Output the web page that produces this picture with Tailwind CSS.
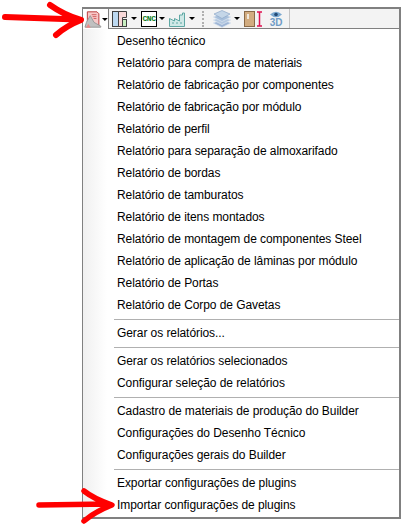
<!DOCTYPE html>
<html lang="pt">
<head>
    <meta charset="UTF-8">
    <title>Relatórios</title>
    <script src="https://cdn.jsdelivr.net/npm/@tailwindcss/browser@4"></script>
</head>
<body class="bg-white">
    <div class="relative w-[401px] h-[530px] overflow-hidden bg-white pt-[7px] pl-[82px] font-['Liberation_Sans',sans-serif] text-[12px] tracking-[-0.07px] text-black">
        <div class="w-[319px] h-[512px] border-l border-b-2 border-r-2 border-[#808080] bg-white flex flex-col">
            <!-- toolbar -->
            <div class="h-[22px] flex shrink-0">
                <div class="w-[26px] h-[23px] border-t-2 border-[#808080] border-r bg-white flex items-center pl-[1px]">
                    <svg width="19" height="19" viewBox="0 0 19 19">
                        <path d="M3.500 1.500h10l2 2v12h-12z" fill="#f8c8c8" stroke="#b83838"/>
                        <path d="M8 4.500h5M9 6.500h4M10 8.500h3" stroke="#d06060"/>
                        <path d="M1 17.500l1.500-5 4-7 4 7 7 4v1z" fill="#c0c0c0" stroke="#989898"/>
                        <path d="M2 18h5l-2.500-4z" fill="#ee8888"/>
                    </svg>
                    <svg width="6" height="3" viewBox="0 0 6 3"><path d="M0 0h6L3 3z" fill="#000"/></svg>
                </div>
                <div class="flex-1 border-t-2 border-b border-[#808080] bg-[#f3f3f3] flex items-center">
                    <svg width="16" height="16" viewBox="0 0 16 16" class="ml-[3px]">
                        <rect x="0.500" y="0.500" width="6" height="15" fill="#bcd8f0" stroke="#404040"/>
                        <path d="M6.500 0.500h8v6h-4v9h-4z" fill="#f8d8d8" stroke="#404040"/>
                        <rect x="10.500" y="8.500" width="4" height="7" fill="#c8eec0" stroke="#404040"/>
                    </svg>
                    <svg width="6" height="3" viewBox="0 0 6 3" class="ml-[3px]"><path d="M0 0h6L3 3z" fill="#000"/></svg>
                    <div class="ml-[4px] w-[16px] h-[16px] border border-black bg-white flex items-center justify-center font-['Liberation_Mono',monospace] text-[8px] font-bold text-[#0a7a20] leading-none tracking-[-0.5px]">CNC</div>
                    <svg width="6" height="3" viewBox="0 0 6 3" class="ml-[2px]"><path d="M0 0h6L3 3z" fill="#000"/></svg>
                    <svg width="18" height="16" viewBox="0 0 18 16" class="ml-[4px]">
                        <path d="M0.500 15.500v-8l5 2.500v-2.500l5 2.500v-6h3v-2h2v13.500z" fill="#cfe8e6" stroke="#5fa8a4"/>
                        <path d="M3 12h2M7 12h2M11 12h2" stroke="#5fa8a4"/>
                    </svg>
                    <svg width="6" height="3" viewBox="0 0 6 3" class="ml-[2px]"><path d="M0 0h6L3 3z" fill="#000"/></svg>
                    <div class="ml-[7px] w-[1px] h-[16px] border-l-2 border-dotted border-[#b0b0b0]"></div>
                    <svg width="20" height="18" viewBox="0 0 20 18" class="ml-[8px]">
                        <path d="M10 9.500l9 3.500-9 4.500-9-4.500z" fill="#9fb6d6" stroke="#dfe8f2" stroke-width="0.700"/>
                        <path d="M10 6.500l9 3.500-9 4.500-9-4.500z" fill="#b4c8e0" stroke="#dfe8f2" stroke-width="0.700"/>
                        <path d="M10 3.500l9 3.500-9 4.500-9-4.500z" fill="#a8c0dc" stroke="#dfe8f2" stroke-width="0.700"/>
                        <path d="M10 0.500l8 3.500-8 4.500-8-4.500z" fill="#c4d6e8" stroke="#8ea8c8" stroke-width="0.700"/>
                    </svg>
                    <svg width="6" height="3" viewBox="0 0 6 3" class="ml-[2px]"><path d="M0 0h6L3 3z" fill="#000"/></svg>
                    <svg width="19" height="16" viewBox="0 0 19 16" class="ml-[4px]">
                        <rect x="0.500" y="0.500" width="10" height="15" fill="#d2ac80" stroke="#8a6a48"/>
                        <rect x="3" y="3" width="2" height="5" fill="#f0e8dc"/>
                        <path d="M13 1h5M13 15h5M15.500 1v14" stroke="#e01050" stroke-width="1.500"/>
                    </svg>
                    <div class="ml-[5px] w-[16px] flex flex-col items-center leading-none">
                        <svg width="12" height="7" viewBox="0 0 12 7"><path d="M0 3.500Q6-2 12 3.500Q6 9 0 3.500z" fill="#7aa8d0"/><circle cx="6" cy="3.500" r="1.800" fill="#244a74"/></svg>
                        <span class="font-bold text-[10px] leading-[9px] text-[#6f9cc6]">3D</span>
                    </div>
                    <div class="ml-[5px] w-[1px] self-stretch bg-[#c4c4c4]"></div>
                </div>
            </div>
            <!-- menu -->
            <div class="flex-1 flex pt-[1px] bg-gradient-to-r from-[#f0f0f0] to-white to-[24px]">
                <div class="flex-1 pl-[34px]">
                    <div class="h-[22px] leading-[22px]">Desenho técnico</div>
                    <div class="h-[22px] leading-[22px]">Relatório para compra de materiais</div>
                    <div class="h-[22px] leading-[22px]">Relatório de fabricação por componentes</div>
                    <div class="h-[22px] leading-[22px]">Relatório de fabricação por módulo</div>
                    <div class="h-[22px] leading-[22px]">Relatório de perfil</div>
                    <div class="h-[22px] leading-[22px]">Relatório para separação de almoxarifado</div>
                    <div class="h-[22px] leading-[22px]">Relatório de bordas</div>
                    <div class="h-[22px] leading-[22px]">Relatório de tamburatos</div>
                    <div class="h-[22px] leading-[22px]">Relatório de itens montados</div>
                    <div class="h-[22px] leading-[22px]">Relatório de montagem de componentes Steel</div>
                    <div class="h-[22px] leading-[22px]">Relatório de aplicação de lâminas por módulo</div>
                    <div class="h-[22px] leading-[22px]">Relatório de Portas</div>
                    <div class="h-[22px] leading-[22px]">Relatório de Corpo de Gavetas</div>
                    <div class="h-[6px] flex items-center -ml-[3px]"><div class="w-full h-[1px] bg-[#b0b0b0]"></div></div>
                    <div class="h-[22px] leading-[22px]">Gerar os relatórios...</div>
                    <div class="h-[6px] flex items-center -ml-[3px]"><div class="w-full h-[1px] bg-[#b0b0b0]"></div></div>
                    <div class="h-[22px] leading-[22px]">Gerar os relatórios selecionados</div>
                    <div class="h-[22px] leading-[22px]">Configurar seleção de relatórios</div>
                    <div class="h-[6px] flex items-center -ml-[3px]"><div class="w-full h-[1px] bg-[#b0b0b0]"></div></div>
                    <div class="h-[22px] leading-[22px]">Cadastro de materiais de produção do Builder</div>
                    <div class="h-[22px] leading-[22px]">Configurações do Desenho Técnico</div>
                    <div class="h-[22px] leading-[22px]">Configurações gerais do Builder</div>
                    <div class="h-[6px] flex items-center -ml-[3px]"><div class="w-full h-[1px] bg-[#b0b0b0]"></div></div>
                    <div class="h-[22px] leading-[22px]">Exportar configurações de plugins</div>
                    <div class="h-[22px] leading-[22px]">Importar configurações de plugins</div>
                </div>
            </div>
        </div>
        <!-- red annotation arrows -->
        <svg class="absolute left-0 top-0 pointer-events-none" width="120" height="530" viewBox="0 0 120 530">
            <path d="M5 17L78 19.500M50 5Q64 15 81 20Q66 26 56 35" fill="none" stroke="#ff0000" stroke-width="6" stroke-linecap="round" stroke-linejoin="round"/>
            <path d="M39 505L108 504M84 491Q94 499 112 505Q96 511 84 521" fill="none" stroke="#ff0000" stroke-width="5.500" stroke-linecap="round" stroke-linejoin="round"/>
        </svg>
    </div>
</body>
</html>
